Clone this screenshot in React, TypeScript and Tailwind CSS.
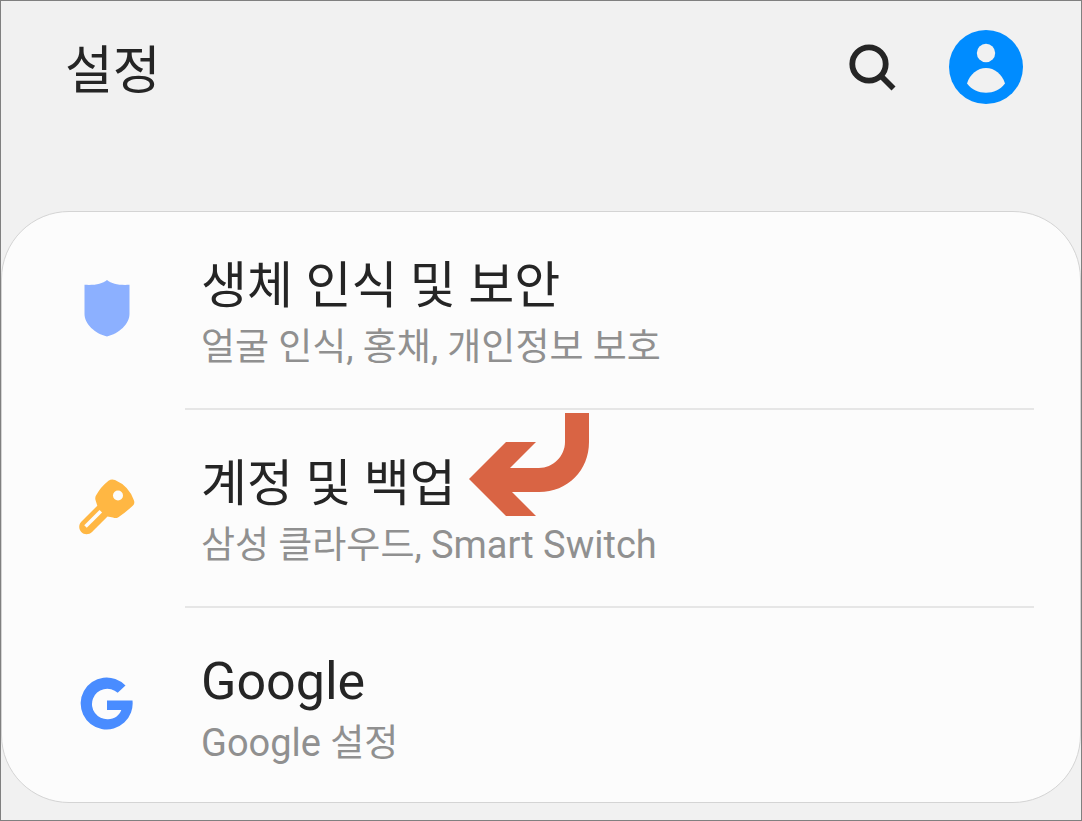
import type { ReactNode } from "react";

type SettingsItem = {
  id: string;
  title: ReactNode;
  description: ReactNode;
  icon: ReactNode;
  highlighted?: boolean;
};

function SearchIcon() {
  return (
    <svg width="48" height="48" viewBox="0 0 48 48" fill="none" stroke="#252525" aria-hidden="true">
      <circle cx="21" cy="21" r="16.7" strokeWidth="5.8" />
      <path d="M32.5 32.5L45.5 45.5" strokeWidth="5.6" />
    </svg>
  );
}

function ProfileIcon() {
  return (
    <svg width="74" height="74" viewBox="0 0 74 74" aria-hidden="true">
      <circle cx="37" cy="37" r="37" fill="#008cff" />
      <circle cx="37" cy="23" r="9.2" fill="#f1f1f1" />
      <path d="M18 53.5C21 44 28.5 38 37 38S53 44 56 53.5C51 60 44.5 62.7 37 62.7S23 60 18 53.5Z" fill="#f1f1f1" />
    </svg>
  );
}

function ShieldIcon() {
  return (
    <svg width="60" height="60" viewBox="0 0 60 60" fill="#8cb0ff" aria-hidden="true">
      <path d="M30 1C35 4.8 42 6.5 52.5 5.8V35C52.5 45 42 54.5 30 57.5C18 54.5 7.5 45 7.5 35V5.8C18 6.5 25 4.8 30 1Z" />
    </svg>
  );
}

function KeyIcon() {
  return (
    <svg width="60" height="60" viewBox="0 0 60 60" aria-hidden="true">
      <path
        d="M31.5 3.7Q34.5 1.5 38 3Q52 9 57 23.5Q58 26.5 56 28.5Q48 36 41 40.5Q38.5 41.5 36 40.5L30.5 39.5L15 55C12 58 7 58 4.3 55C1.5 52 1.5 47.5 4.5 44.5L20.3 28.7L18.5 23C18 21 18.3 19.5 19 18.5Q23.5 10 31.5 3.7Z"
        fill="#ffb743"
      />
      <circle cx="41" cy="18.5" r="5" fill="#fcfcfc" />
      <path d="M8.5 49.5L23.8 34.2" stroke="#fcfcfc" strokeWidth="3.6" />
    </svg>
  );
}

function GoogleIcon() {
  return (
    <svg width="60" height="60" viewBox="0 0 60 60" fill="#498cff" aria-hidden="true">
      <path d="M48.5 12.5A26 26 0 1 0 55.5 27.5H30V37H44.3C42.3 42.5 37.5 46.3 31 46.3A15.3 15.3 0 1 1 40.7 19.8Z" />
    </svg>
  );
}

function PointerArrow() {
  return (
    <svg
      className="absolute bottom-0.5 left-full ml-[13px]"
      width="120"
      height="103"
      viewBox="0 0 120 103"
      fill="#d96444"
      aria-hidden="true"
    >
      <path d="M0 66L37 29H67L41 55H70C84 55 96 43 96 29V0H120V29C120 57 99 79 70 79H43L67 103H37Z" />
    </svg>
  );
}

const items: SettingsItem[] = [
  {
    id: "security",
    title: "생체 인식 및 보안",
    description: "얼굴 인식, 홍채, 개인정보 보호",
    icon: <ShieldIcon />,
  },
  {
    id: "accounts",
    title: "계정 및 백업",
    description: (
      <>
        삼성 클라우드, <span className="text-[38px] leading-none">Smart Switch</span>
      </>
    ),
    icon: <KeyIcon />,
    highlighted: true,
  },
  {
    id: "google",
    title: <span className="text-[52px] leading-none">Google</span>,
    description: (
      <>
        <span className="text-[38px] leading-none">Google</span> 설정
      </>
    ),
    icon: <GoogleIcon />,
  },
];

function SettingsRow({ item }: { item: SettingsItem }) {
  return (
    <li className="group">
      <a href={`#${item.id}`} className="flex pr-[46px]">
        <span className="flex w-[183px] shrink-0 items-center pb-1 pl-[75px]">{item.icon}</span>
        <span className="flex grow flex-col border-b-2 border-[#e6e6e6] pb-8 pl-4 pt-10 group-last:border-b-0 group-last:pb-[30px]">
          <span className="relative self-start text-[50px] leading-[68px] text-[#252525]">
            {item.title}
            {item.highlighted && <PointerArrow />}
          </span>
          <span className="text-[37px] leading-[56px] text-[#909090]">{item.description}</span>
        </span>
      </a>
    </li>
  );
}

export default function App() {
  return (
    <main className="min-h-screen border border-[#808080] bg-[#f1f1f1] pb-[17px] font-['Roboto','Noto_Sans_CJK_KR',sans-serif]">
      {/* Header */}
      <header className="flex h-[210px] items-start justify-between pl-16 pr-[58px] pt-[29px]">
        <h1 className="text-[52px] leading-[84px] text-[#252525]">설정</h1>
        <div className="flex items-center gap-[53px]">
          <button type="button" aria-label="검색">
            <SearchIcon />
          </button>
          <button type="button" aria-label="프로필">
            <ProfileIcon />
          </button>
        </div>
      </header>

      {/* Settings list */}
      <ul className="overflow-hidden rounded-[68px] border border-[#d4d4d4] bg-[#fcfcfc]">
        {items.map((item) => (
          <SettingsRow key={item.id} item={item} />
        ))}
      </ul>
    </main>
  );
}
